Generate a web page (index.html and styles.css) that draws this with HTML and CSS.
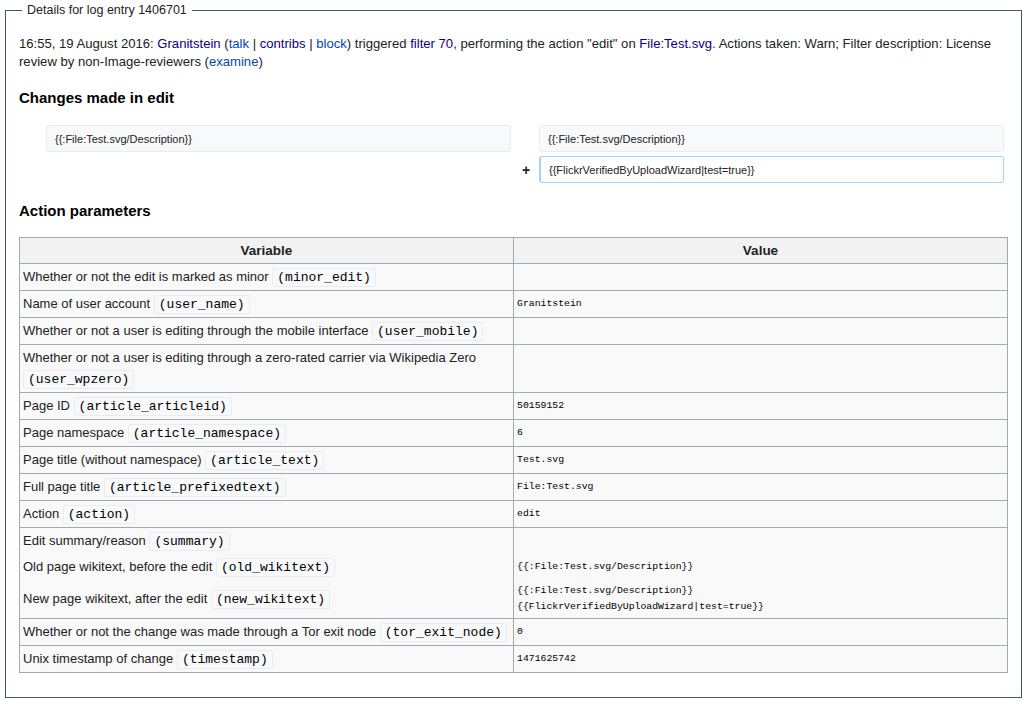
FILE: index.html
```html
<!DOCTYPE html>
<html lang="en">
<head>
<meta charset="utf-8">
<title>Details for log entry 1406701</title>
<link rel="stylesheet" href="styles.css">
</head>
<body>
<fieldset class="log">
  <legend class="log-legend">Details for log entry 1406701</legend>
  <p class="summary-line">16:55, 19 August 2016: <a class="v" href="#">Granitstein</a> (<a href="#">talk</a> | <a class="v" href="#">contribs</a> | <a href="#">block</a>) triggered <a class="v" href="#">filter 70</a>, performing the action "edit" on <a class="v" href="#">File:Test.svg</a>. Actions taken: Warn; Filter description: License review by non-Image-reviewers (<a href="#">examine</a>)</p>

  <h3 class="section-title">Changes made in edit</h3>
  <div class="diff">
    <div class="marker"></div>
    <div class="line ctx">{{:File:Test.svg/Description}}</div>
    <div class="marker"></div>
    <div class="line ctx">{{:File:Test.svg/Description}}</div>
    <div class="marker"></div>
    <div class="empty"></div>
    <div class="marker plus">+</div>
    <div class="line add">{{FlickrVerifiedByUploadWizard|test=true}}</div>
  </div>

  <h3 class="section-title params">Action parameters</h3>
  <table class="vars">
    <thead>
      <tr><th>Variable</th><th>Value</th></tr>
    </thead>
    <tbody>
      <tr><td>Whether or not the edit is marked as minor <code>(minor_edit)</code></td><td class="val"></td></tr>
      <tr><td>Name of user account <code>(user_name)</code></td><td class="val">Granitstein</td></tr>
      <tr><td>Whether or not a user is editing through the mobile interface <code>(user_mobile)</code></td><td class="val"></td></tr>
      <tr><td>Whether or not a user is editing through a zero-rated carrier via Wikipedia Zero <code>(user_wpzero)</code></td><td class="val"></td></tr>
      <tr><td>Page ID <code>(article_articleid)</code></td><td class="val">50159152</td></tr>
      <tr><td>Page namespace <code>(article_namespace)</code></td><td class="val">6</td></tr>
      <tr><td>Page title (without namespace) <code>(article_text)</code></td><td class="val">Test.svg</td></tr>
      <tr><td>Full page title <code>(article_prefixedtext)</code></td><td class="val">File:Test.svg</td></tr>
      <tr><td>Action <code>(action)</code></td><td class="val">edit</td></tr>
      <tr><td>Edit summary/reason <code>(summary)</code></td><td class="val"></td></tr>
      <tr class="joined"><td>Old page wikitext, before the edit <code>(old_wikitext)</code></td><td class="val">{{:File:Test.svg/Description}}</td></tr>
      <tr class="joined"><td>New page wikitext, after the edit <code>(new_wikitext)</code></td><td class="val multi">{{:File:Test.svg/Description}}<br>{{FlickrVerifiedByUploadWizard|test=true}}</td></tr>
      <tr><td>Whether or not the change was made through a Tor exit node <code>(tor_exit_node)</code></td><td class="val">0</td></tr>
      <tr><td>Unix timestamp of change <code>(timestamp)</code></td><td class="val">1471625742</td></tr>
    </tbody>
  </table>
</fieldset>
</body>
</html>
```

FILE: styles.css
```css
html, body {
  margin: 0;
  padding: 0;
  background: #ffffff;
}

body {
  font-family: "Liberation Sans", Arial, sans-serif;
  font-size: 13px;
  color: #222222;
}

a {
  color: #0645ad;
  text-decoration: none;
}

a.v {
  color: #0b0080;
}

.log {
  margin: 0 6px 0 5px;
  padding: 0 13px 24px 13px;
  border: 1px solid #3b5a6e;
  min-width: 0;
}

.log-legend {
  font-size: 12.5px;
  line-height: 20px;
  padding: 0 5px;
  margin-left: 3px;
  color: #222222;
}

.summary-line {
  margin: 15px 0 0 0;
  line-height: 18px;
  font-size: 13.1px;
}

.section-title {
  font-size: 15px;
  font-weight: bold;
  margin: 17px 0 0 0;
  line-height: 20px;
  color: #000000;
}

.diff {
  display: grid;
  grid-template-columns: 27px 1fr 28px 1fr;
  row-gap: 4px;
  padding-right: 4px;
  margin-top: 17px;
}

.marker {
  font-weight: bold;
  font-size: 14px;
  display: flex;
  align-items: center;
  justify-content: center;
  padding-left: 2px;
}

.line {
  font-size: 11px;
  line-height: 14px;
  padding: 6px 8px 5px 8px;
  border-radius: 3px;
  color: #222222;
}

.ctx {
  background: #f8f9fa;
  border: 1px solid #eaecf0;
}

.add {
  background: #ffffff;
  border: 1px solid #a3d3ff;
  border-left-width: 2px;
  padding-top: 6px;
  padding-bottom: 5px;
}

.params {
  margin-top: 18px;
}

.vars {
  width: 100%;
  margin-top: 16px;
  border-collapse: collapse;
  table-layout: fixed;
  background: #f9f9f9;
}

.vars th,
.vars td {
  border: 1px solid #a2a9b1;
  padding: 2px 3px 3px 3px;
  line-height: 21px;
  vertical-align: middle;
  text-align: left;
}

.vars th {
  background: #f2f2f2;
  text-align: center;
  font-weight: bold;
  font-size: 13.5px;
  padding: 2px 3px 2px 3px;
}

.vars tr.joined td {
  border-top-style: hidden;
}

.vars code {
  font-family: "Liberation Mono", "Courier New", monospace;
  font-size: 13px;
  line-height: 15px;
  color: #000000;
  background: #f8f9fa;
  border: 1px solid #eaecf0;
  border-radius: 2px;
  padding: 1px 4px;
  white-space: nowrap;
}

.vars td.val {
  font-family: "Liberation Mono", "Courier New", monospace;
  font-size: 9.8px;
  color: #000000;
}

.vars td.multi {
  line-height: 16px;
  padding-top: 3px;
  padding-bottom: 3px;
}
```
